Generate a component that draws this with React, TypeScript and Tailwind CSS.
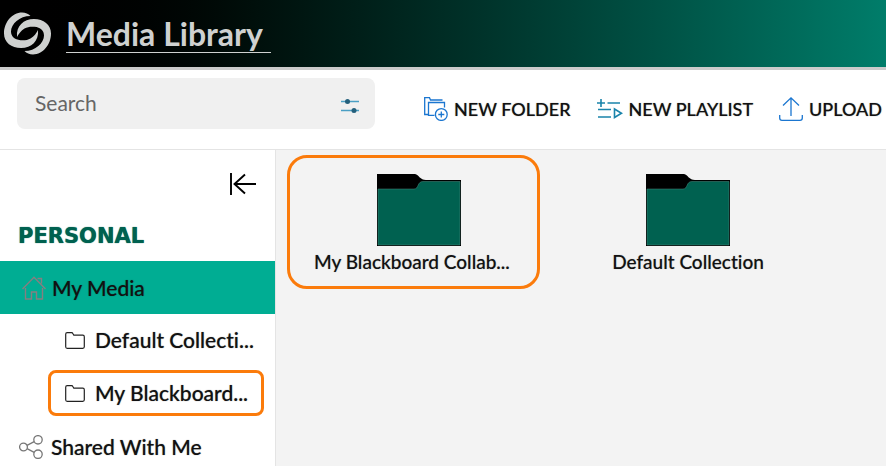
import React from "react";

function Logo() {
  const arm =
    "M30.500 16C28.500 13.800 25.500 12.600 22 12.600C12 12.600 4 22.500 4 33.500C4 42.500 11.500 48 21 48C31.500 48 39 41 38 30C36.500 33 34 36.500 30.500 38.500C27.500 40.200 24 40.600 20.500 40.200C14.500 39.500 11 36.500 11 31.500C11 24 19.500 16 30.500 16Z";
  return (
    <svg viewBox="4 12 48 43" className="h-[43px] w-12 shrink-0" fill="#cfd1d0" aria-hidden="true">
      <path d={arm} />
      <path d={arm} transform="rotate(180 27.5 33.5)" />
    </svg>
  );
}

function SlidersIcon() {
  return (
    <svg viewBox="0 0 18 16" className="h-4 w-[18px]" aria-hidden="true">
      <path d="M0 3.500H18M0 12.500H18" stroke="#4a9fc4" strokeWidth="1.400" />
      <circle cx="6.500" cy="3.500" r="2.500" fill="#24607c" />
      <circle cx="13" cy="12.500" r="2.500" fill="#24607c" />
    </svg>
  );
}

function NewFolderIcon() {
  return (
    <svg viewBox="0 0 24 24" className="h-6 w-6 shrink-0" fill="none" stroke="#1b76d0" strokeWidth="1.300" aria-hidden="true">
      <path d="M18.500 3H6.500L5.500 .700H.700V17.500H4.500M10.500 18.300H4.500V5.500H20.500V10.500" />
      <circle cx="17.300" cy="17.500" r="5.900" />
      <path d="M17.300 14.500V20.500M14.300 17.500H20.300" />
    </svg>
  );
}

function PlaylistIcon() {
  return (
    <svg viewBox="0 0 26 20" className="h-5 w-[26px] shrink-0" fill="none" stroke="#1a84ab" strokeWidth="1.600" aria-hidden="true">
      <path d="M4 0V8M0 4H8M10.500 4H23M1 10.500H14M1 18H14" />
      <path d="M17.500 10V18.500L24.500 14.200Z" />
    </svg>
  );
}

function UploadIcon() {
  return (
    <svg viewBox="0 0 24 24" className="h-6 w-6 shrink-0" fill="none" stroke="#1b76d0" strokeWidth="1.300" aria-hidden="true">
      <path d="M12 19V1M4 8.500L12 .900L20 8.500M.700 18V21Q.700 23.300 3 23.300H21Q23.300 23.300 23.300 21V18" />
    </svg>
  );
}

function CollapseIcon() {
  return (
    <svg viewBox="0 0 28 22" className="h-[22px] w-7" fill="none" stroke="#000" strokeWidth="1.900" aria-hidden="true">
      <path d="M2 0V22M5 11H27M16 1.500L5.500 11L16 20.500" />
    </svg>
  );
}

function HomeIcon() {
  return (
    <svg viewBox="0 0 24 24" className="h-6 w-6 shrink-0" fill="none" stroke="#857f80" strokeWidth="1.400" aria-hidden="true">
      <path d="M.500 13L12 1.200L23.500 13M3.500 12V23H9.500V16H14.500V23H20.500V12M15.500 2.500H19.500V7.500" />
    </svg>
  );
}

function FolderOutline() {
  return (
    <svg viewBox="0 0 20 17" className="h-[17px] w-5 shrink-0" fill="none" stroke="#222" strokeWidth="1.200" aria-hidden="true">
      <path d="M.700 2.200Q.700.700 2.200.700H6.500Q7.500.700 8 1.700L8.800 3.200H17.800Q19.300 3.200 19.300 4.700V14.800Q19.300 16.300 17.800 16.300H2.200Q.700 16.300.700 14.800Z" />
    </svg>
  );
}

function ShareIcon() {
  return (
    <svg viewBox="0 0 24 24" className="h-6 w-6 shrink-0" fill="none" stroke="#777" strokeWidth="1.300" aria-hidden="true">
      <circle cx="4.500" cy="12" r="3.900" />
      <circle cx="19" cy="4.800" r="4.200" />
      <circle cx="19" cy="19.200" r="4.200" />
      <path d="M8 10.300L15.200 6.700M8 13.700L15.200 17.300" />
    </svg>
  );
}

function FolderArt() {
  return (
    <svg viewBox="0 0 84 72" className="h-[72px] w-[84px]" aria-hidden="true">
      <path d="M0 0H38C42 1 43 6 49 6H84V72H0Z" fill="#000" />
      <path d="M1 15H37C42 15 40 7.500 46 7.500H83V71H1Z" fill="#006150" stroke="#4b8a7e" strokeWidth=".5" />
    </svg>
  );
}

function Action({ icon, label }: { icon: React.ReactNode; label: string }) {
  return (
    <button
      type="button"
      className="flex items-center gap-1.5 text-lg leading-6 font-medium whitespace-nowrap text-shadow-[0_0_1px_#1118]"
    >
      {icon}
      {label}
    </button>
  );
}

function SubItem({ label, active = false }: { label: string; active?: boolean }) {
  return (
    <a
      href="#"
      className={
        "mr-[11px] ml-12 flex h-[46px] items-center gap-2.5 rounded-lg border-3 pl-3.5 " +
        (active ? "border-[#fb7b0b]" : "border-transparent")
      }
    >
      <FolderOutline />
      <span className="whitespace-nowrap">{label}</span>
    </a>
  );
}

function Collection({ label, active = false }: { label: string; active?: boolean }) {
  return (
    <a
      href="#"
      className={
        "flex h-[134px] w-[253px] flex-col items-center rounded-[20px] border-3 pt-4 pr-[13px] pl-6 text-[19px] leading-6 font-medium text-shadow-[0_0_1px_#1116] " +
        (active ? "border-[#fb7b0b] text-left" : "border-transparent text-center")
      }
    >
      <FolderArt />
      <span className="mt-1 w-full whitespace-nowrap">{label}</span>
    </a>
  );
}

export default function App() {
  return (
    <div className="flex min-h-screen flex-col overflow-hidden bg-white font-[Lato,sans-serif] text-[#111] [font-variant-ligatures:none]">
      <header className="flex h-[70px] items-start gap-3.5 border-b-3 border-[#cbcbcb] bg-linear-to-r from-black to-[#007d6a] pt-3 pl-1">
        <Logo />
        <h1 className="mt-1 border-b border-[#cfd1d0] pr-2 text-[32px] leading-9 font-bold text-[#cfd1d0]">Media Library</h1>
      </header>

      <div className="flex h-20 items-start justify-between border-b border-[#e4e4e4] pt-2 pr-1 pl-[17px]">
        <div className="flex h-[51px] w-[358px] items-center rounded-lg bg-[#f0f0f0] pr-4 pl-[18px]">
          <input
            aria-label="Search"
            placeholder="Search"
            className="min-w-0 flex-1 bg-transparent pb-0.5 text-[21px] outline-none placeholder:text-[#666]"
          />
          <button type="button" aria-label="Search filters" className="pt-1">
            <SlidersIcon />
          </button>
        </div>
        <div className="flex items-center gap-[26px] pt-[19px]">
          <Action icon={<NewFolderIcon />} label="NEW FOLDER" />
          <Action icon={<PlaylistIcon />} label="NEW PLAYLIST" />
          <Action icon={<UploadIcon />} label="UPLOAD" />
        </div>
      </div>

      <div className="flex flex-1">
        <nav className="w-[276px] shrink-0 border-r border-[#e4e4e4] text-[21px] leading-7 font-medium">
          <div className="flex justify-end pt-[23px] pr-[18px]">
            <button type="button" aria-label="Collapse sidebar" className="block">
              <CollapseIcon />
            </button>
          </div>
          <h2 className="mt-[27px] mb-[11px] pl-[18px] font-['DejaVu_Sans',sans-serif] text-[21px] leading-7 font-bold text-[#006150] text-shadow-[0_0_1px_#006150]">
            PERSONAL
          </h2>
          <div className="text-shadow-[0_0_1px_#1118]">
            <a href="#" className="flex h-[53px] items-center gap-1.5 bg-[#00ad93] pl-[22px]">
              <HomeIcon />
              My Media
            </a>
            <div className="flex flex-col gap-[7px] pt-[3px]">
              <SubItem label="Default Collecti..." />
              <SubItem label="My Blackboard..." active />
            </div>
            <a href="#" className="mt-1 flex h-[53px] items-center gap-2 pl-[19px]">
              <ShareIcon />
              Shared With Me
            </a>
          </div>
        </nav>
        <main className="flex flex-1 items-start gap-4 bg-[#f3f3f3] pt-[5px] pl-[11px]">
          <Collection label="My Blackboard Collab..." active />
          <Collection label="Default Collection" />
        </main>
      </div>
    </div>
  );
}
